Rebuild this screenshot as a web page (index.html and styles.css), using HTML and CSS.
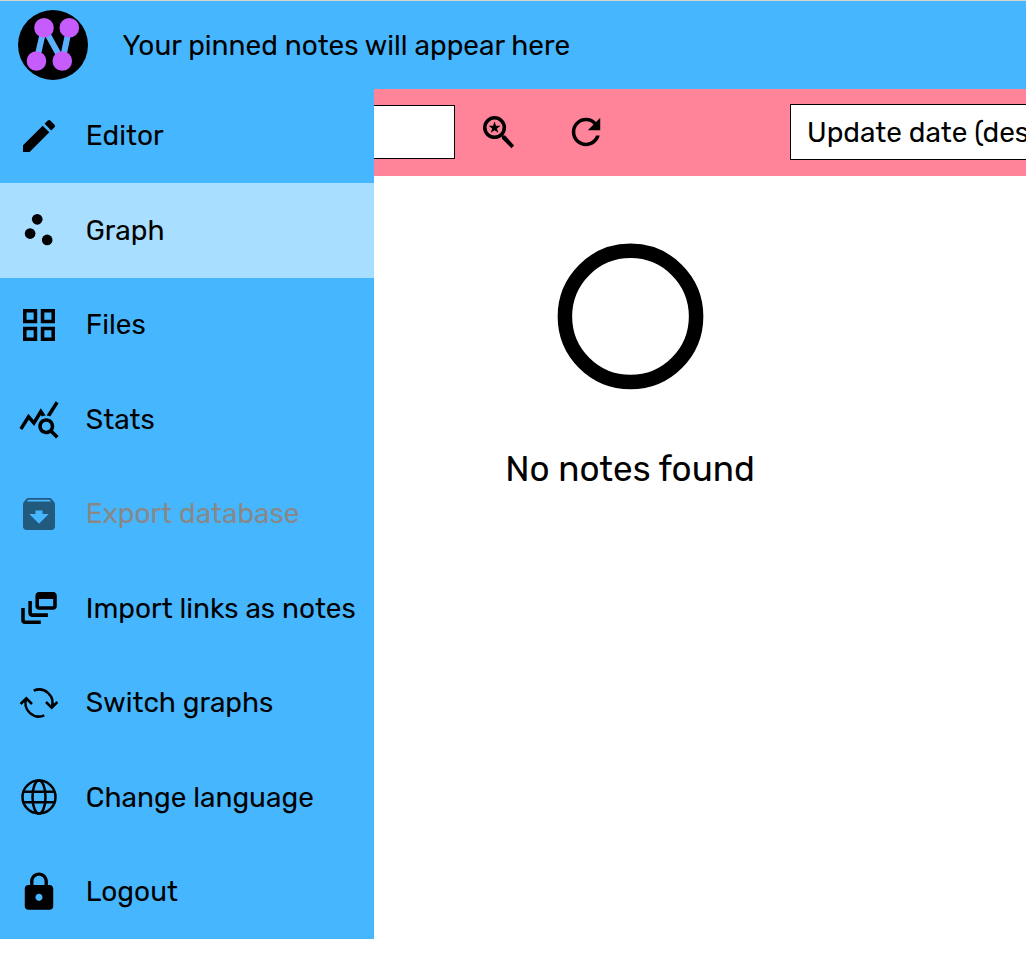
FILE: index.html
```html
<!DOCTYPE html>
<html lang="en">
<head>
<meta charset="utf-8">
<title>Notes</title>
<link rel="stylesheet" href="styles.css">
</head>
<body>
<header class="header">
  <svg class="logo" viewBox="0 0 70 70">
    <circle cx="35" cy="35" r="35"/>
    <path class="logo-links" d="M18.5 51 26 17.8 44.3 51 51.3 17.8"/>
    <g class="logo-nodes"><circle cx="26" cy="17.8" r="9.8"/><circle cx="51.3" cy="17.8" r="9.8"/><circle cx="18.5" cy="51" r="9.8"/><circle cx="44.3" cy="51" r="9.8"/></g>
  </svg>
  <p class="pins">Your pinned notes will appear here</p>
</header>
<main class="main">
  <div class="toolbar">
    <div class="search"></div>
    <svg class="icon tool-search" viewBox=".19 .19 23.62 23.62"><circle class="ring" cx="9.5" cy="9.5" r="5.5"/><path d="M15.5 14h-.79l-.28-.27-1 1 .27.28v.79l5.3 5.29L20.49 19.6z"/><path d="m9.5 6.1.85 2.35 2.55.05-2.05 1.5.75 2.4-2.1-1.45-2.1 1.45.75-2.4L6.1 8.5l2.55-.05z"/></svg>
    <svg class="icon tool-refresh" viewBox=".19 .19 23.62 23.62"><path d="M17.65 6.35C16.2 4.9 14.21 4 12 4c-4.42 0-7.99 3.58-7.99 8s3.57 8 7.99 8c3.73 0 6.84-2.55 7.73-6h-2.08c-.82 2.33-3.04 4-5.65 4-3.31 0-6-2.69-6-6s2.69-6 6-6c1.66 0 3.14.69 4.22 1.78L13 11h7V4l-2.35 2.35z"/></svg>
    <div class="sort">Update date (descending)</div>
  </div>
  <section class="empty">
    <svg class="empty-ring" viewBox="0 0 146 146"><circle cx="73.5" cy="72.4" r="65.6"/></svg>
    <p class="empty-text">No notes found</p>
  </section>
</main>
<nav class="menu">
  <a class="item"><svg class="icon" viewBox=".19 .19 23.62 23.62"><path d="M3 17.25V21h3.75L17.81 9.94l-3.75-3.75L3 17.25zM20.71 7.04c.39-.39.39-1.02 0-1.41l-2.34-2.34c-.39-.39-1.02-.39-1.41 0l-1.83 1.83 3.75 3.75 1.83-1.83z"/></svg><span>Editor</span></a>
  <a class="item active"><svg class="icon" viewBox=".19 .19 23.62 23.62"><circle cx="7" cy="14" r="3"/><circle cx="11" cy="6" r="3"/><circle cx="16.6" cy="17.6" r="3"/></svg><span>Graph</span></a>
  <a class="item"><svg class="icon" viewBox=".19 .19 23.62 23.62"><path d="M3 3v8h8V3H3zm6 6H5V5h4v4zm-6 4v8h8v-8H3zm6 6H5v-4h4v4zm4-16v8h8V3h-8zm6 6h-4V5h4v4zm-6 4v8h8v-8h-8zm6 6h-4v-4h4v4z"/></svg><span>Files</span></a>
  <a class="item"><svg class="icon" viewBox=".19 .19 23.62 23.62"><path d="M19.88 18.47c.44-.7.7-1.51.7-2.39 0-2.49-2.01-4.5-4.5-4.5s-4.5 2.01-4.5 4.5 2.01 4.5 4.49 4.5c.88 0 1.7-.26 2.39-.7L21.58 23 23 21.58l-3.12-3.11zm-3.8.11c-1.38 0-2.5-1.12-2.5-2.5s1.12-2.5 2.5-2.5 2.5 1.12 2.5 2.5-1.12 2.5-2.5 2.5zm-.36-8.5c-.74.02-1.45.18-2.1.45l-.55-.83-3.8 6.18-3.01-3.52-3.63 5.81L1 17l5-8 3 3.5L13 6l2.72 4.08zm2.59.5c-.64-.28-1.33-.45-2.05-.49L21.38 2 23 3.18l-4.69 7.4z"/></svg><span>Stats</span></a>
  <a class="item disabled"><svg class="icon" viewBox=".19 .19 23.62 23.62"><path d="M20.54 5.23l-1.39-1.68C18.88 3.21 18.47 3 18 3H6c-.47 0-.88.21-1.16.55L3.46 5.23C3.17 5.57 3 6.02 3 6.5V19c0 1.1.9 2 2 2h14c1.1 0 2-.9 2-2V6.5c0-.48-.17-.93-.46-1.27zM12 17.5L6.5 12H10v-2h4v2h3.5L12 17.5zM5.12 5l.81-1h12l.94 1H5.12z"/></svg><span>Export database</span></a>
  <a class="item"><svg class="icon" viewBox=".19 .19 23.62 23.62"><path d="M8 8H6v7c0 1.1.9 2 2 2h9v-2H8V8zM20 3h-8c-1.1 0-2 .9-2 2v6c0 1.1.9 2 2 2h8c1.1 0 2-.9 2-2V5c0-1.1-.9-2-2-2zm0 8h-8V7h8v4zM4 12H2v7c0 1.1.9 2 2 2h9v-2H4v-7z"/></svg><span>Import links as notes</span></a>
  <a class="item"><svg class="icon line" viewBox="-21 -21 42 42"><path d="M-5.3-12.3A13.4 13.4 0 0 1 12.7 4.5M7-1l5.7 5.7L18.4-1M5.3 12.3A13.4 13.4 0 0 1-12.7-4.5M-18.4 1l5.7-5.7L-7 1"/></svg><span>Switch graphs</span></a>
  <a class="item"><svg class="icon line" viewBox="-21 -21 42 42"><circle r="16.5"/><ellipse rx="6.5" ry="16.5"/><path d="M-15.5-5.2h31M-15.5 5.2h31"/></svg><span>Change language</span></a>
  <a class="item"><svg class="icon" viewBox=".19 .19 23.62 23.62"><path d="M18 8h-1V6c0-2.76-2.24-5-5-5S7 3.24 7 6v2H6c-1.1 0-2 .9-2 2v10c0 1.1.9 2 2 2h12c1.1 0 2-.9 2-2V10c0-1.1-.9-2-2-2zm-6 9c-1.1 0-2-.9-2-2s.9-2 2-2 2 .9 2 2-.9 2-2 2zm3.1-9H8.9V6c0-1.71 1.39-3.1 3.1-3.1 1.71 0 3.1 1.39 3.1 3.1v2z"/></svg><span>Logout</span></a>
</nav>
</body>
</html>
```
FILE: styles.css
```css
* { box-sizing: border-box; }
body {
  margin: 0;
  height: 971px;
  overflow: hidden;
  background: #fff;
  color: #000;
  font: 28px/34px Rubik, Roboto, sans-serif;
  display: grid;
  grid-template-columns: 374px 1fr;
  grid-template-rows: 89px 1fr;
}
p { margin: 0; }
svg { display: block; flex: none; overflow: visible; }
.header {
  grid-column: 1 / -1;
  display: flex;
  align-items: center;
  gap: 34.6px;
  padding-left: 18px;
  border-top: 1px solid #d5d5d5;
  background: #46b6ff;
}
.pins { padding-top: 2px; }
.logo { width: 70px; height: 70px; }
.logo-links { fill: none; stroke: #5ab2ff; stroke-width: 6; }
.logo-nodes { fill: #c55cfb; }
.icon { width: 42px; height: 42px; }
.line { fill: none; stroke: #000; stroke-width: 2.5; }
.ring { fill: none; stroke: #000; stroke-width: 2; }
.menu {
  grid-column: 1;
  grid-row: 2;
  align-self: start;
  height: 850px;
  margin-top: -.4px;
  display: grid;
  grid-template-rows: repeat(9, 94.5px);
  background: #46b6ff;
}
.item {
  display: flex;
  align-items: center;
  gap: 25.8px;
  padding-left: 18px;
  white-space: nowrap;
}
.item span { padding-top: .6px; }
.active { background: #a8deff; }
.disabled { color: #888; }
.disabled .icon { opacity: .5; }
.main { grid-column: 2; grid-row: 2; min-width: 0; }
.toolbar {
  display: flex;
  align-items: center;
  height: 87px;
  padding-bottom: 1px;
  overflow: hidden;
  background: #ff8499;
}
.search {
  flex: none;
  width: 81px;
  height: 54px;
  border: 1px solid #000;
  border-left: 0;
  background: #fff;
}
.tool-search { margin-left: 23px; }
.tool-refresh { margin-left: 45px; }
.sort {
  flex: none;
  width: 380px;
  height: 56px;
  margin-left: 183px;
  padding: 11px 16px;
  border: 1px solid #000;
  background: #fff;
  white-space: nowrap;
}
.empty {
  display: flex;
  flex-direction: column;
  align-items: center;
  width: 512px;
  padding-top: 68px;
}
.empty-ring {
  width: 146px;
  height: 146px;
  fill: none;
  stroke: #000;
  stroke-width: 14.5;
}
.empty-text { margin-top: 57px; font-size: 35px; line-height: 44px; }
```
